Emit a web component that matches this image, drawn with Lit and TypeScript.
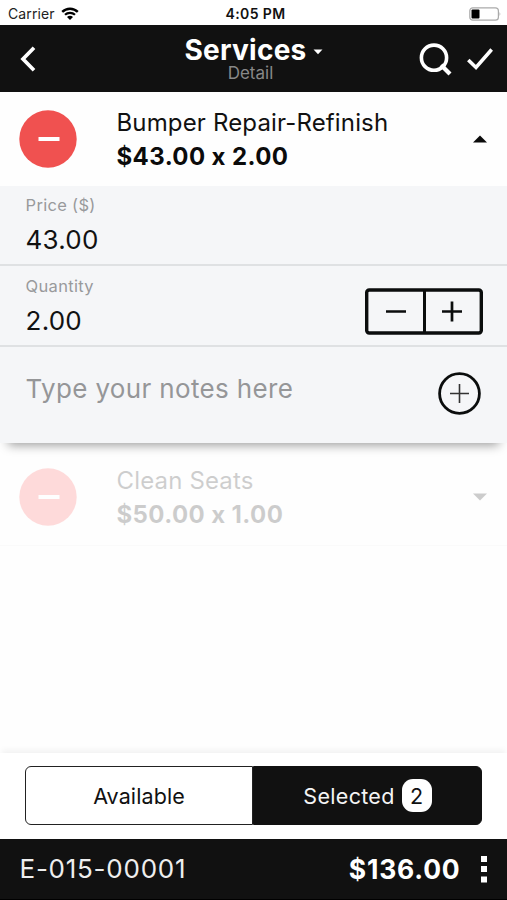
import { LitElement, html, css, svg } from "lit";
import { customElement, property } from "lit/decorators.js";
import { classMap } from "lit/directives/class-map.js";

@customElement("service-item")
class ServiceItem extends LitElement {
  @property() name = "";
  @property() amount = "";
  @property({ type: Boolean }) open = false;

  static styles = css`
    :host { display: block; }
    .row { display: flex; align-items: center; height: 94px; padding: 0 20px 0 19px; box-sizing: border-box; }
    .dim { opacity: 0.2; }
    .remove { width: 58px; height: 58px; flex: none; }
    .text { flex: 1; padding-left: 39.5px; padding-top: 1px; }
    .name { font-size: 24px; line-height: 34px; letter-spacing: 0.15px; color: #111; white-space: nowrap; }
    .amount { font-size: 24px; line-height: 34px; font-weight: 700; letter-spacing: 0.4px; color: #0b0b0b; white-space: nowrap; }
    .arrow { width: 14px; height: 8px; flex: none; }
  `;

  render() {
    return html`<div class=${classMap({ row: true, dim: !this.open })}>
      <svg class="remove" viewBox="0 0 58 58">
        <circle cx="29" cy="29" r="28.7" fill=${this.open ? "#f05150" : "#ff5150"} />
        <rect x="19.5" y="27" width="21" height="4" fill="#fff" />
      </svg>
      <div class="text">
        <div class="name">${this.name}</div>
        <div class="amount">${this.amount}</div>
      </div>
      <svg class="arrow" viewBox="0 0 14 8">
        <path d=${this.open ? "M0 7.5L7 .5L14 7.5Z" : "M0 .5L7 7.5L14 .5Z"} fill="#0b0b0b" />
      </svg>
    </div>`;
  }
}

const wifi = svg`
  <path d="M1.2 4.9C5.6.6 12.4.6 16.8 4.9" fill="none" stroke="#000" stroke-width="2.4"/>
  <path d="M4 7.8C6.8 5.1 11.2 5.1 14 7.8" fill="none" stroke="#000" stroke-width="2.2"/>
  <path d="M6 10C7.7 8.4 10.3 8.4 12 10L9 13Z"/>`;

@customElement("app-root")
class AppRoot extends LitElement {
  static styles = css`
    :host {
      display: flex; flex-direction: column; width: 507px; height: 900px; overflow: hidden;
      background: #fefefe; color: #111; font-family: Inter, "Liberation Sans", sans-serif;
    }
    svg { display: block; flex: none; }
    .status {
      display: grid; grid-template-columns: 1fr auto 1fr; align-items: center; height: 25px; flex: none;
      padding: 2px 6px 0 8px; box-sizing: border-box; font-size: 14px; line-height: 23px; background: #fff;
    }
    .carrier { display: flex; align-items: center; gap: 6px; letter-spacing: 0.1px; color: #222; }
    .time { font-weight: 600; letter-spacing: 0.4px; padding-left: 2px; }
    .battery { justify-self: end; }
    .header {
      display: grid; grid-template-columns: 1fr auto 1fr; align-items: center; height: 67px; flex: none;
      padding: 0 14px; box-sizing: border-box; background: #111; color: #fff;
    }
    .back { margin-left: 6px; }
    .heading { display: flex; flex-direction: column; align-items: center; padding-top: 2px; }
    .title { display: flex; align-items: center; gap: 6px; font-size: 28px; line-height: 27px; font-weight: 700; letter-spacing: 0.25px; }
    .caret { margin-top: 3px; }
    .sub { font-size: 17px; line-height: 19px; color: #888; padding-right: 6px; }
    .actions { display: flex; justify-content: flex-end; align-items: center; gap: 14px; }
    .panel { background: #f5f6f8; position: relative; flex: none; box-shadow: 0 10px 10px -8px rgba(0, 0, 0, 0.4); }
    .field { height: 81px; border-bottom: 2px solid #dfe1e3; box-sizing: border-box; padding: 6px 24px 0 25.6px; display: flex; justify-content: space-between; align-items: center; }
    .price { height: 80px; }
    .label { font-size: 16.5px; line-height: 23px; letter-spacing: 0.3px; color: #999a9c; }
    .value { font-size: 26px; line-height: 45px; letter-spacing: 0.2px; }
    .notes { height: 96px; padding: 0 26px 4px 25.5px; box-sizing: border-box; display: flex; justify-content: space-between; align-items: center; }
    .hint { font-size: 26px; letter-spacing: 0.35px; color: #959698; padding-bottom: 9px; }
    .stepper { margin-top: 6px; }
    .list { padding-top: 7px; height: 95px; flex: none; border-bottom: 1px solid #fafafa; background: #fefefe; }
    .space { flex: 1; }
    .tabs { height: 86px; flex: none; background: #fff; padding: 13px 25px 14px; box-sizing: border-box; display: grid; grid-template-columns: 228px 229px; box-shadow: 0 -5px 6px -2px rgba(0, 20, 20, 0.05); }
    .tab { display: flex; align-items: center; justify-content: center; gap: 7px; box-sizing: border-box; border: 1.5px solid #222; border-radius: 6px 0 0 6px; font-size: 21.5px; letter-spacing: 0.1px; }
    .active { background: #111; color: #f4f4f4; border-radius: 0 6px 6px 0; border-color: #111; letter-spacing: 0.3px; }
    .count { background: #fff; color: #111; width: 30px; height: 33px; border-radius: 11px; display: flex; align-items: center; justify-content: center; }
    .total { height: 61px; flex: none; background: #111; color: #fff; display: flex; align-items: center; padding: 0 20px 1px 19.5px; box-sizing: border-box; border-bottom: 1px solid #000; font-size: 26px; }
    .code { flex: 1; letter-spacing: 0.75px; color: #eee; }
    .sum { font-size: 26.5px; font-weight: 700; letter-spacing: 0.8px; padding-right: 20.5px; }
  `;

  render() {
    return html`
      <div class="status">
        <div class="carrier"><span>Carrier</span>
          <svg width="18" height="14" viewBox="0 0 18 14">${wifi}</svg></div>
        <div class="time">4:05 PM</div>
        <svg class="battery" width="32" height="14" viewBox="0 0 32 14">
          <rect x=".8" y=".8" width="28.6" height="12.4" rx="3" fill="#fff" stroke="#aaa" stroke-width="1.2"/>
          <rect x="2.5" y="2.5" width="8" height="9" rx="1" fill="#000"/>
          <path d="M30.6 4.8Q32 7 30.6 9.2Z" fill="#999"/>
        </svg>
      </div>
      <div class="header">
        <svg class="back" width="16" height="26" viewBox="0 0 16 26"><path d="M14 1.8L3 13L14 24.2" fill="none" stroke="#fff" stroke-width="3.7"/></svg>
        <div class="heading">
          <div class="title"><span>Services</span>
            <svg class="caret" width="10" height="6" viewBox="0 0 10 6"><path d="M.5 .5H9.5L5 5.3Z" fill="#fff"/></svg></div>
          <div class="sub">Detail</div>
        </div>
        <div class="actions">
          <svg width="34" height="34" viewBox="0 0 34 34"><circle cx="15" cy="15.7" r="12.6" fill="none" stroke="#fff" stroke-width="3.6"/><path d="M22 23L31 32" stroke="#fff" stroke-width="4.2"/></svg>
          <svg width="26" height="24" viewBox="0 0 26 24"><path d="M1.3 13L9 20.5L24.7 2.5" fill="none" stroke="#fff" stroke-width="3.6"/></svg>
        </div>
      </div>
      <service-item name="Bumper Repair-Refinish" amount="$43.00 x 2.00" open></service-item>
      <div class="panel">
        <div class="field price">
          <div><div class="label">Price ($)</div><div class="value">43.00</div></div>
        </div>
        <div class="field">
          <div><div class="label">Quantity</div><div class="value">2.00</div></div>
          <svg class="stepper" width="118" height="47" viewBox="0 0 118 47">
            <rect x="1.7" y="2" width="114.6" height="43" rx="2.5" fill="none" stroke="#0b0d0d" stroke-width="3.4"/>
            <path d="M59.5 2V45" stroke="#0b0d0d" stroke-width="3"/>
            <path d="M21 23.5H41M77 23.5H97M87 13.5V33.5" stroke="#0b0d0d" stroke-width="2.7"/>
          </svg>
        </div>
        <div class="notes">
          <div class="hint">Type your notes here</div>
          <svg width="43" height="43" viewBox="0 0 43 43"><circle cx="21.5" cy="21.5" r="19.9" fill="none" stroke="#0b0d0d" stroke-width="2.8"/><path d="M12 21.5H31M21.5 12V31" stroke="#333" stroke-width="1.6"/></svg>
        </div>
      </div>
      <div class="list"><service-item name="Clean Seats" amount="$50.00 x 1.00"></service-item></div>
      <div class="space"></div>
      <div class="tabs">
        <div class="tab">Available</div>
        <div class="tab active"><span>Selected</span><span class="count">2</span></div>
      </div>
      <div class="total">
        <div class="code">E-015-00001</div>
        <div class="sum">$136.00</div>
        <svg width="6" height="28" viewBox="0 0 6 28"><path d="M0 1H6V7H0ZM0 11H6V17H0ZM0 21.5H6V27.5H0Z" fill="#fff"/></svg>
      </div>
    `;
  }
}
